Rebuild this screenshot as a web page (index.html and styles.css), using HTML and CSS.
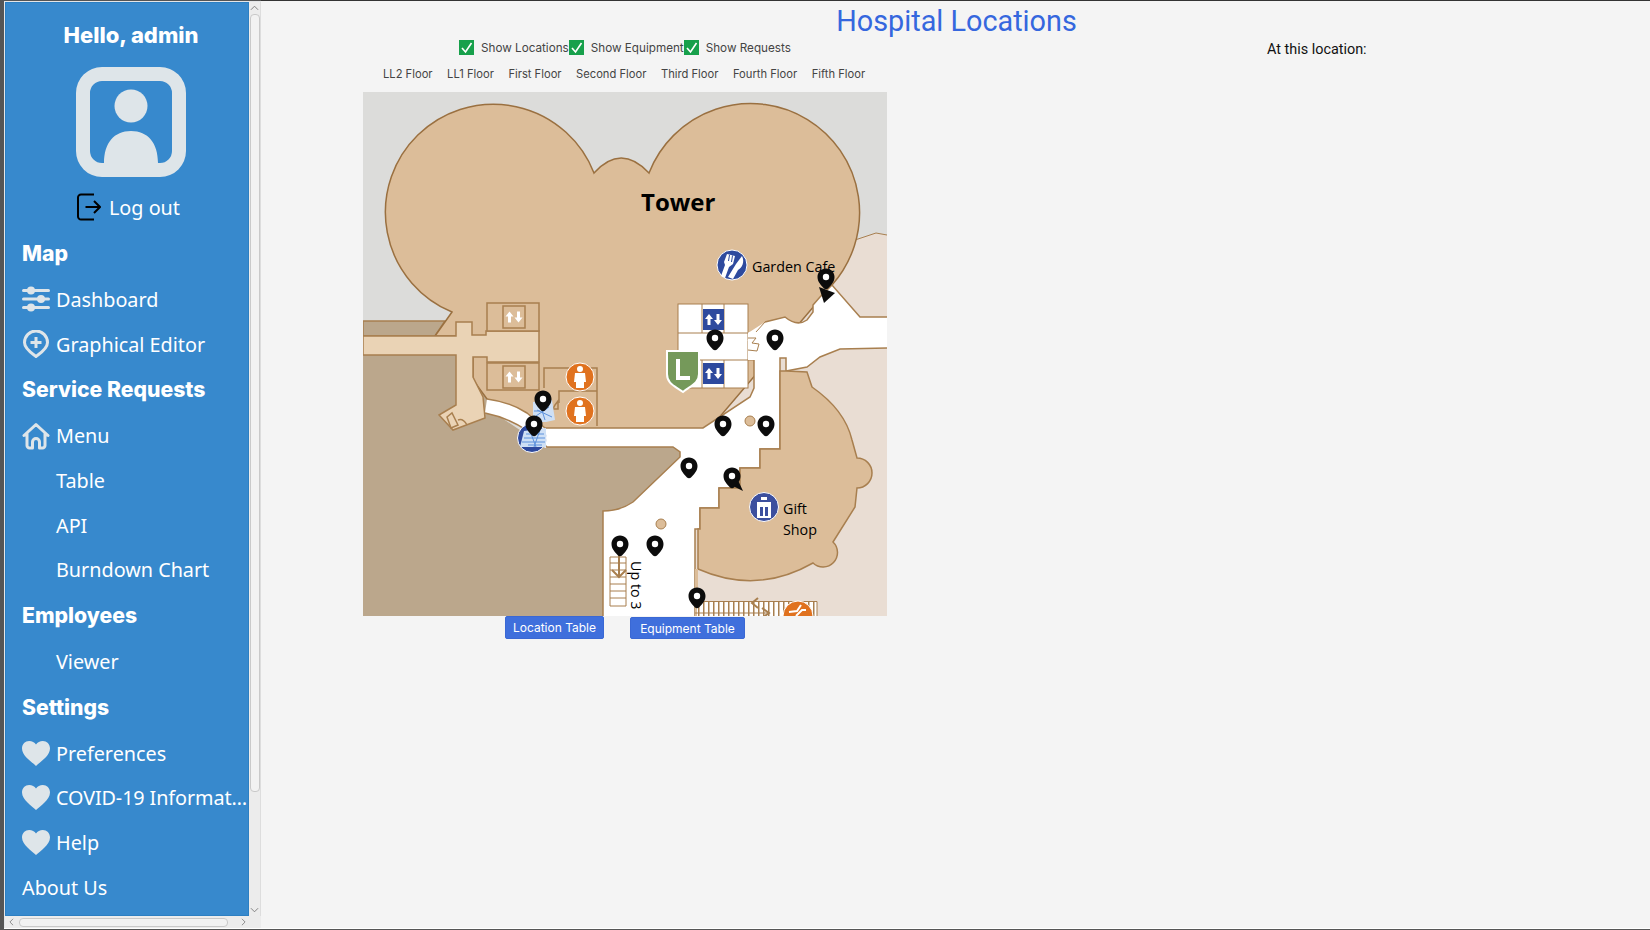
FILE: index.html
```html
<!DOCTYPE html>
<html lang="en">
<head>
  <meta charset="UTF-8" />
  <title>Hospital Locations</title>
  <link rel="stylesheet" href="styles.css">
</head>
<body>

<svg class="defs">
  <defs>
    <symbol id="heart" viewBox="0 0 28 25">
      <path d="M14 25C10 21 0 15 0 7.500C0 3 3.200 0 7.200 0C10 0 12.600 1.300 14 3.500C15.400 1.300 18 0 20.800 0C24.800 0 28 3 28 7.500C28 15 18 21 14 25Z" />
    </symbol>
    <g id="pin">
      <path d="M0 -10.500C-5 -10.500 -8.500 -6.500 -8.500 -2C-8.500 3 -5 6 -2 9.500C-1 10.500 1 10.500 2 9.500C5 6 8.500 3 8.500 -2C8.500 -6.500 5 -10.500 0 -10.500Z" fill="#0c0c0c" />
      <circle cx="0" cy="-2" r="3.200" fill="#fff" />
    </g>
    <g id="lift-arrows">
      <path d="M-4.500 -5.500L-8.500 -0.500H-6V5.500H-3V-0.500H-0.500ZM4.500 5.500L8.500 0.500H6V-5.500H3V0.500H0.500Z" fill="#fff" />
    </g>
  </defs>
</svg>

<div class="app">
  <nav class="sidebar">
    <div class="sidebar-inner">
      <div class="hello">Hello, admin</div>
      <svg class="avatar" viewBox="0 0 110 110">
        <path fill-rule="evenodd" d="M26 0H84A26 26 0 0 1 110 26V84A26 26 0 0 1 84 110H26A26 26 0 0 1 0 84V26A26 26 0 0 1 26 0ZM26 14A12 12 0 0 0 14 26V84A12 12 0 0 0 26 96H28C28 76 38 64 55 64C72 64 82 76 82 96H84A12 12 0 0 0 96 84V26A12 12 0 0 0 84 14Z" fill="#dee5e9" />
        <circle cx="55" cy="39" r="16.500" fill="#dee5e9" />
      </svg>
      <div class="logout">
        <svg class="logout-icon" viewBox="0 0 24 28">
          <path d="M17 1.500H4A3 3 0 0 0 1 4.500V23.500A3 3 0 0 0 4 26.500H17" />
          <path d="M8.500 14H23M17 8L23 14L17 20" />
        </svg>
        <span>Log out</span>
      </div>

      <div class="nav-head">Map</div>
      <a class="nav-item">
        <svg class="nav-icon" viewBox="0 0 28 25">
          <g fill="#dee5e9">
            <rect x="0" y="2.500" width="28" height="3" rx="1.500" />
            <rect x="0" y="11" width="28" height="3" rx="1.500" />
            <rect x="0" y="19.500" width="28" height="3" rx="1.500" />
            <circle cx="9" cy="4" r="4" />
            <circle cx="19" cy="12.500" r="4" />
            <circle cx="9" cy="21" r="4" />
          </g>
        </svg>
        <span>Dashboard</span>
      </a>
      <a class="nav-item">
        <svg class="nav-icon" viewBox="0 0 28 28">
          <path d="M14 26.500C11 24 2.500 19 2.500 12.500A11.500 11.500 0 0 1 25.500 12.500C25.500 19 17 24 14 26.500Z" fill="none" stroke="#dee5e9" stroke-width="3" />
          <path d="M14 7V18M8.500 12.500H19.500" fill="none" stroke="#dee5e9" stroke-width="3" />
        </svg>
        <span>Graphical Editor</span>
      </a>

      <div class="nav-head">Service Requests</div>
      <a class="nav-item">
        <svg class="nav-icon" viewBox="0 0 28 28">
          <path d="M2 13.500L14 2.500L26 13.500M5 11V23.500A2.500 2.500 0 0 0 7.500 26H10.500V20A3.500 3.500 0 0 1 17.500 20V26H20.500A2.500 2.500 0 0 0 23 23.500V11" fill="none" stroke="#dee5e9" stroke-width="3" stroke-linejoin="round" stroke-linecap="round" />
        </svg>
        <span>Menu</span>
      </a>
      <a class="nav-item sub"><span>Table</span></a>
      <a class="nav-item sub"><span>API</span></a>
      <a class="nav-item sub"><span>Burndown Chart</span></a>

      <div class="nav-head">Employees</div>
      <a class="nav-item sub"><span>Viewer</span></a>

      <div class="nav-head">Settings</div>
      <a class="nav-item">
        <svg class="nav-icon heart"><use href="#heart" /></svg>
        <span>Preferences</span>
      </a>
      <a class="nav-item">
        <svg class="nav-icon heart"><use href="#heart" /></svg>
        <span class="clip">COVID-19 Information</span>
      </a>
      <a class="nav-item">
        <svg class="nav-icon heart"><use href="#heart" /></svg>
        <span>Help</span>
      </a>
      <a class="nav-item plain"><span>About Us</span></a>
    </div>
    <div class="vbar">
      <svg class="bar-arrow" viewBox="0 0 10 8"><path d="M1 6L5 2L9 6" /></svg>
      <div class="vthumb"></div>
      <svg class="bar-arrow" viewBox="0 0 10 8"><path d="M1 2L5 6L9 2" /></svg>
    </div>
    <div class="hbar">
      <svg class="bar-arrow" viewBox="0 0 8 10"><path d="M6 1L2 5L6 9" /></svg>
      <div class="hthumb"></div>
      <svg class="bar-arrow" viewBox="0 0 8 10"><path d="M2 1L6 5L2 9" /></svg>
    </div>
  </nav>

  <main class="content">
    <h1 class="title">Hospital Locations</h1>
    <div class="columns">
      <section class="map-col">
        <div class="checks">
          <label class="check"><span class="box"><svg viewBox="0 0 15 15"><path d="M3 8L6.500 12L12.500 3" /></svg></span>Show Locations</label>
          <label class="check"><span class="box"><svg viewBox="0 0 15 15"><path d="M3 8L6.500 12L12.500 3" /></svg></span>Show Equipment</label>
          <label class="check"><span class="box"><svg viewBox="0 0 15 15"><path d="M3 8L6.500 12L12.500 3" /></svg></span>Show Requests</label>
        </div>
        <div class="floors">
          <span>LL2 Floor</span>
          <span>LL1 Floor</span>
          <span>First Floor</span>
          <span>Second Floor</span>
          <span>Third Floor</span>
          <span>Fourth Floor</span>
          <span>Fifth Floor</span>
        </div>

        <svg class="map" viewBox="363 92 524 524">
          <rect x="363" y="92" width="524" height="524" fill="#dcdcda" />
          <!-- outer wings -->
          <path d="M855 240L876 233L887 235V616H690V340Z" fill="#e9ddd3" />
          <path d="M855 240L876 233L887 235" fill="none" stroke="#a87f4f" />
          <path d="M363 355H490V410L545 447H680V520L603 616H363Z" fill="#bba78c" />
          <path d="M363 321H445L435 336H363Z" fill="#bba78c" stroke="#a87f4f" stroke-width="1.500" />

          <!-- tower -->
          <path d="M452 312A108 108 0 1 1 594 173Q621 143 649 173A109 109 0 1 1 832 285L700 440L545 440L487 399L473 380V336L435 336Z" fill="#dcbd99" stroke="#9a7040" stroke-width="1.500" />

          <!-- west hall -->
          <path d="M363 336H456V322H472V335H486V331H539V362H487V357H473V377L483 397L485 418L453 430L439 415L456 405V355H363Z" fill="#ead3b5" stroke="#a87f4f" stroke-width="1.500" />
          <path d="M447 417L452 413L458 425L451 428ZM458 420Q463 418 467 425" fill="none" stroke="#a87f4f" stroke-width="1.500" />

          <!-- lift rooms -->
          <rect x="487" y="303" width="52" height="28" fill="#dcbd99" stroke="#a87f4f" stroke-width="1.500" />
          <rect x="487" y="363" width="52" height="27" fill="#dcbd99" stroke="#a87f4f" stroke-width="1.500" />
          <rect x="503" y="306" width="22" height="22" fill="#dcbd99" stroke="#a87f4f" stroke-width="1.500" />
          <rect x="503" y="366" width="22" height="22" fill="#dcbd99" stroke="#a87f4f" stroke-width="1.500" />
          <use href="#lift-arrows" x="514" y="317" />
          <use href="#lift-arrows" x="514" y="377" />

          <!-- restrooms -->
          <path d="M544 388V368H597V391H559V403M559 391H597V426" fill="none" stroke="#a87f4f" stroke-width="1.500" />
          <path d="M555 405L558 401V409H553Z" fill="none" stroke="#a87f4f" stroke-width="1.500" />

          <!-- white corridors -->
          <path d="M487 399Q510 402 527 413L545 428H703L750 397L754 388V360H678V304H748V332L756 332L765 322L785 317Q797 327 807 320L813 312V305L820 297L832 285L860 317H887V348L840 349L820 357L807 367L786 371V358H780V449H760V468H740V488H719V508H700V529H695V616H603V511Q620 511 633 502L680 457V452L673 447H547L545 448Q520 420 485 413Z" fill="#fff" />
          <path d="M487 399Q510 402 527 413L545 428H703L750 397L754 388V360M765 322L785 317Q797 327 807 320L813 312V305L820 297L832 285L860 317H887M887 348L840 349L820 357L807 367L786 371V358H780V449H760V468H740V488H719V508H700V529H695V616M603 616V511Q620 511 633 502L680 457V452L673 447H547Q520 420 485 413" fill="none" stroke="#a87f4f" stroke-width="1.500" />

          <!-- lift lobby -->
          <rect x="678" y="304" width="70" height="84" fill="#fff" stroke="#a87f4f" />
          <path d="M678 333H748M678 360H754M702 304V333M724 304V333M702 360V388M724 360V388" fill="none" stroke="#a87f4f" />
          <path d="M748 333L765 322L763 328L756 332V338L747 340L754 343L757 351L754 360H748Z" fill="#fff" />
          <path d="M748 338L756 338L752 343L759 344L757 351L748 350" fill="#fff" stroke="#a87f4f" />
          <path d="M756 332L765 322" fill="none" stroke="#a87f4f" />

          <!-- gift shop wing -->
          <path d="M786 371L807 372L812 387Q845 410 852 440L857 458A15 15 0 0 1 857 488L855 507L833 542A14.500 14.500 0 0 1 813 563Q757 595 698 569V529H700V508H719V488H740V468H760V449H780V371Z" fill="#dcbd99" stroke="#a87f4f" stroke-width="1.500" />
          <rect x="695" y="569" width="3" height="47" fill="#dcbd99" />

          <!-- columns -->
          <circle cx="750" cy="421" r="5" fill="#dcbd99" stroke="#a87f4f" />
          <circle cx="661" cy="524" r="5" fill="#dcbd99" stroke="#a87f4f" />

          <!-- stairs -->
          <path d="M610 557H626V606H610ZM610 563H626M610 570H626M610 577H626M610 584H626M610 591H626M610 598H626" fill="none" stroke="#a87f4f" />
          <path d="M619 555V577M612 570L619 577L626 570" fill="none" stroke="#a87f4f" stroke-width="2" />
          <rect x="697" y="601" width="120" height="15" fill="#fff" />
          <path d="M698 608.500H817" fill="none" stroke="#a87f4f" stroke-width="15" stroke-dasharray="1.500 3.500" />
          <path d="M697 601.500H817V616M695 613H768" fill="none" stroke="#a87f4f" />
          <path d="M758 598L752 603L758 608M762 608L769 613L762 618" fill="none" stroke="#a87f4f" stroke-width="2" />

          <!-- lift signs -->
          <rect x="703" y="309" width="21" height="21" fill="#2e4a9e" />
          <rect x="703" y="363" width="21" height="21" fill="#2e4a9e" />
          <use href="#lift-arrows" x="713.500" y="319.500" />
          <use href="#lift-arrows" x="713.500" y="373.500" />

          <!-- L shield -->
          <path d="M667 351H699V374C699 384 690 386 683 392C675 386 667 384 667 374Z" fill="#75995a" stroke="#fff" stroke-width="2" />
          <path d="M678 359V378H690" fill="none" stroke="#fff" stroke-width="4" />

          <!-- round signs -->
          <circle cx="580" cy="377" r="14" fill="#e0721f" stroke="#fff" />
          <circle cx="580" cy="411" r="14" fill="#e0721f" stroke="#fff" />
          <path d="M580 366A3 3 0 0 1 580 372A3 3 0 0 1 580 366ZM575 373H585L586 382H584V388H576V382H574Z" fill="#fff" />
          <path d="M580 400A3 3 0 0 1 580 406A3 3 0 0 1 580 400ZM575 407H585L586 416H584V422H576V416H574Z" fill="#fff" />

          <!-- map signs -->
          <path d="M533 402L552 400L555 420L546 422H533Z" fill="#cfe0f5" />
          <path d="M537 410L552 417M536 416L549 407M540 404L545 420M534 411H540" stroke="#5c92dd" fill="none" />
          <circle cx="532" cy="438" r="14.500" fill="#2e4a9e" stroke="#fff" />
          <path d="M520 447L524 431L546 428L546 447Z" fill="#cfe0f5" />
          <path d="M526 434H544M524 438H545M522 442H545M528 445H542M530 431L536 447M540 430L534 447" stroke="#5c92dd" fill="none" />

          <!-- cafe sign -->
          <circle cx="732" cy="265" r="15" fill="#2e4a9e" stroke="#fff" />
          <path d="M727 254L735 256L733 264L729 267L725 278L721 276L725 265L724 262Z" fill="#fff" />
          <path d="M729.500 255L728.500 261M732.500 255.500L731.500 262" stroke="#2e4a9e" fill="none" />
          <path d="M742 256C745 262 742 268 738 270L733 279L728 277L736 264Z" fill="#fff" />
          <text class="map-label" x="752" y="272">Garden Cafe</text>

          <!-- gift sign -->
          <circle cx="764" cy="507" r="14.500" fill="#3c4f9e" stroke="#fff" />
          <path d="M757 502H771V518H757Z" fill="#fff" />
          <path d="M760 507H763V516H760ZM765 507H768V516H765Z" fill="#3c4f9e" />
          <path d="M761 497H767V500H761Z" fill="#fff" />
          <text class="map-label" x="783" y="514">Gift</text>
          <text class="map-label" x="783" y="535">Shop</text>

          <!-- escalator sign -->
          <circle cx="798" cy="616" r="15" fill="#e0721f" stroke="#fff" />
          <path d="M789 612L797 611L801 605M796 616L802 610H806" fill="none" stroke="#fff" stroke-width="2" />

          <text class="map-title" x="641" y="211">Tower</text>
          <text class="map-label" transform="translate(631 561) rotate(90)">Up to 3</text>

          <!-- arrows -->
          <path d="M819 287L835 293L824 303Z" fill="#0c0c0c" />
          <path d="M727 483L743 491L736 476Z" fill="#0c0c0c" />

          <!-- markers -->
          <use href="#pin" x="543" y="401" />
          <use href="#pin" x="534" y="426" />
          <use href="#pin" x="826" y="279" />
          <use href="#pin" x="715" y="340" />
          <use href="#pin" x="775" y="340" />
          <use href="#pin" x="723" y="426" />
          <use href="#pin" x="766" y="426" />
          <use href="#pin" x="689" y="468" />
          <use href="#pin" x="732" y="478" />
          <use href="#pin" x="620" y="546" />
          <use href="#pin" x="655" y="546" />
          <use href="#pin" x="697" y="598" />
        </svg>

        <div class="map-buttons">
          <button class="btn btn-loc">Location Table</button>
          <button class="btn btn-equip">Equipment Table</button>
        </div>
      </section>

      <aside class="info">At this location:</aside>
    </div>
  </main>
</div>

</body>
</html>
```

FILE: styles.css
```css
html, body {
  margin: 0;
  padding: 0;
  height: 100%;
  overflow: hidden;
  background-color: #555;
}

.defs {
  display: none;
}

.app {
  display: flex;
  box-sizing: border-box;
  height: 928px;
  margin-top: 1px;
  margin-left: 4px;
  border-bottom: 1px solid #fff;
  background-color: #f4f4f4;
  font-family: "Inter", sans-serif;
}

/* sidebar */
.sidebar {
  flex: 0 0 257px;
  box-sizing: border-box;
  height: 927px;
  padding: 1px 0 0 1px;
  display: grid;
  grid-template-columns: 244px 12px;
  grid-template-rows: 914px 12px;
  background-color: #e4e6e8;
}

.sidebar-inner {
  background-color: #3789cd;
  border: 1px solid #2c7fc2;
  box-sizing: border-box;
  color: #fff;
  padding: 0 0 0 16px;
  overflow: hidden;
  font-family: "Noto Sans", sans-serif;
  font-size: 19.8px;
}

.hello {
  font-family: "Inter", sans-serif;
  font-weight: 800;
  font-size: 22px;
  text-align: center;
  margin: 19px 0 0 -8px;
  line-height: 26px;
  white-space: nowrap;
}

.avatar {
  display: block;
  width: 110px;
  height: 110px;
  margin: 19px 0 0 54px;
}

.logout {
  display: flex;
  align-items: center;
  gap: 8px;
  margin: 15px 0 8px 55px;
  height: 30px;
}

.logout-icon {
  width: 24px;
  height: 28px;
  fill: none;
  stroke: #000;
  stroke-width: 2;
}

.nav-head {
  font-family: "Inter", sans-serif;
  font-weight: 800;
  font-size: 21.2px;
  height: 47px;
  line-height: 47px;
}

.nav-item {
  display: flex;
  align-items: center;
  gap: 6px;
  height: 44.7px;
  white-space: nowrap;
}

.nav-item.sub {
  padding-left: 34px;
}

.nav-icon {
  flex: 0 0 28px;
  width: 28px;
  height: 28px;
}

.nav-icon.heart {
  height: 25px;
  fill: #dee5e9;
}

.clip {
  display: block;
  width: 193px;
  overflow: hidden;
  letter-spacing: -0.1px;
  text-overflow: ellipsis;
}

/* scrollbars */
.vbar {
  display: flex;
  flex-direction: column;
  align-items: center;
  justify-content: space-between;
  padding: 2px 0;
  background-color: #ececec;
  border-right: 1px solid #ddd;
}

.vthumb {
  flex: 1;
  width: 8px;
  margin: 2px 0 114px;
  background-color: #f2f2f2;
  border: 1px solid #c9c9c9;
  border-radius: 4px;
}

.hbar {
  grid-column: 1 / 3;
  display: flex;
  align-items: center;
  gap: 3px;
  padding: 0 13px 0 2px;
  background-color: #ececec;
}

.hthumb {
  flex: 0 0 207px;
  height: 7px;
  margin-right: auto;
  background-color: #f2f2f2;
  border: 1px solid #c9c9c9;
  border-radius: 4px;
}

.bar-arrow {
  flex: 0 0 auto;
  width: 9px;
  height: 8px;
  fill: none;
  stroke: #777;
  stroke-width: 1;
}

/* main area */
.content {
  flex: 1;
  min-width: 0;
  border-top: 1px solid #333;
  margin-top: -1px;
}

.title {
  margin: 0;
  padding: 3px 0 0 2px;
  height: 34px;
  line-height: 34px;
  text-align: center;
  font-family: "Roboto", sans-serif;
  font-weight: 400;
  font-size: 28.8px;
  color: #3567de;
}

.columns {
  display: flex;
}

.map-col {
  width: 524px;
  margin-left: 102px;
}

.checks {
  display: flex;
  height: 17px;
  margin-left: 96px;
  padding-top: 1px;
}

.check {
  display: flex;
  align-items: center;
  gap: 7px;
  font-size: 11.7px;
  color: #444;
  white-space: nowrap;
}

.box {
  display: block;
  width: 15px;
  height: 15px;
  background-color: #17a04b;
}

.box svg {
  display: block;
  width: 15px;
  height: 15px;
  fill: none;
  stroke: #fff;
  stroke-width: 1.6;
}

.floors {
  display: flex;
  gap: 14.5px;
  margin: 0 0 0 20px;
  height: 36px;
  padding-top: 11px;
  box-sizing: border-box;
  line-height: 14px;
  font-size: 11.2px;
  color: #444;
  white-space: nowrap;
}

.map {
  display: block;
  width: 524px;
  height: 524px;
}

.map-label {
  font-family: "Open Sans", sans-serif;
  font-size: 14.3px;
  fill: #000;
}

.map-title {
  font-family: "Open Sans", sans-serif;
  font-weight: 700;
  font-size: 24px;
  fill: #000;
}

.map-buttons {
  display: flex;
  align-items: flex-end;
  margin-left: 142px;
  gap: 26px;
}

.btn {
  height: 22px;
  padding: 0;
  border: 1px solid #3a68d4;
  border-radius: 2px;
  background-color: #3f6fdc;
  color: #fff;
  font-family: "Inter", sans-serif;
  font-size: 12px;
}

.btn-loc {
  width: 99px;
  height: 23px;
}

.btn-equip {
  width: 115px;
}

.info {
  margin: 3px 0 0 380px;
  font-family: "Roboto", sans-serif;
  font-size: 14.4px;
  color: #111;
  white-space: nowrap;
}
```
